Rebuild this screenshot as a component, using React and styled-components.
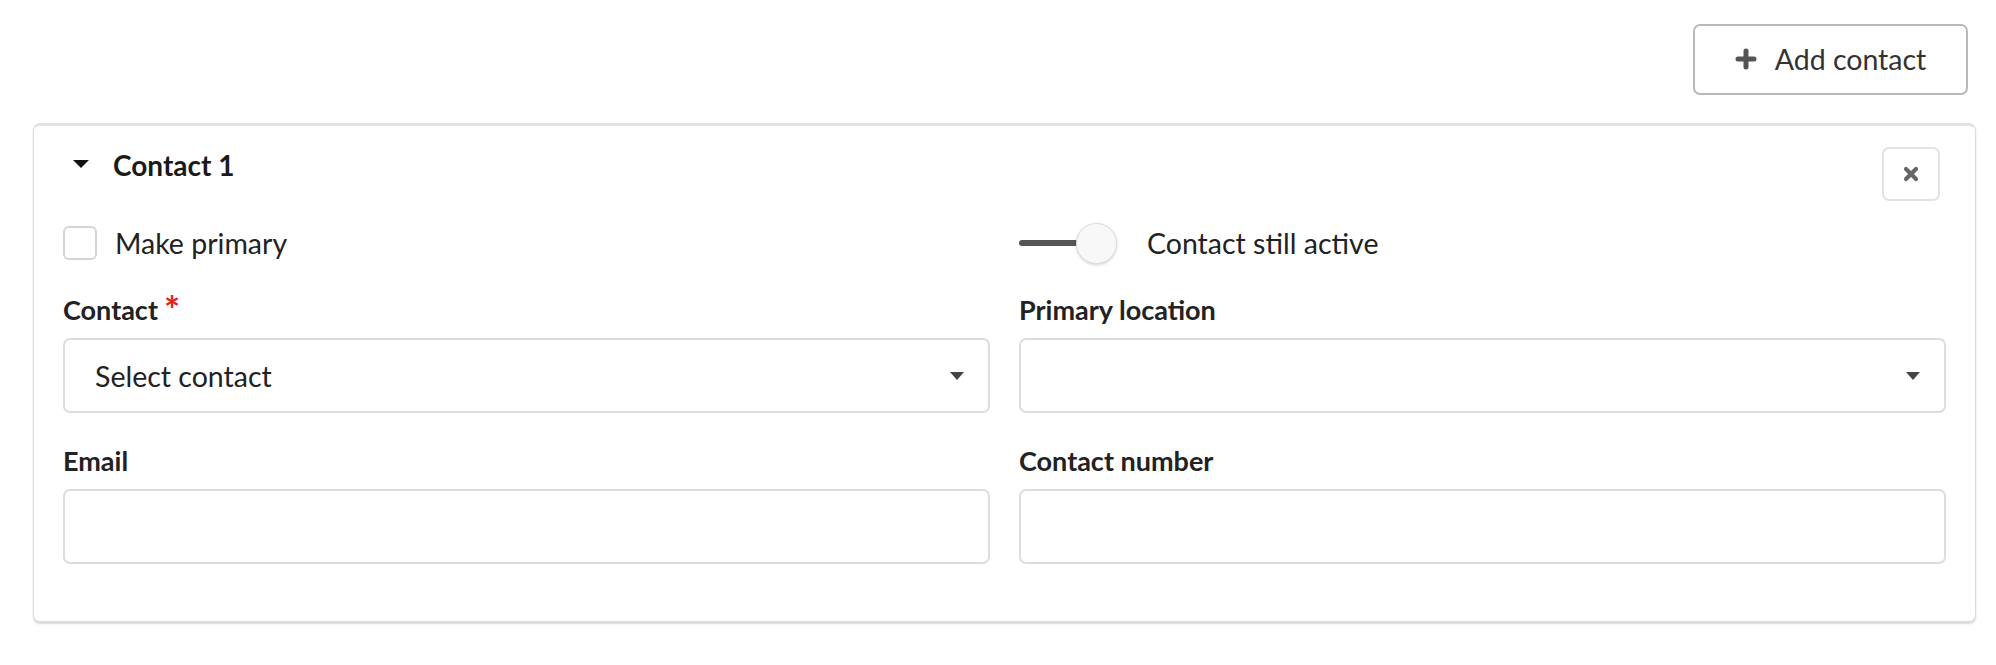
import React from "react";
import styled, { createGlobalStyle } from "styled-components";

const GlobalStyle = createGlobalStyle`
  * {
    box-sizing: border-box;
  }
  body {
    margin: 0;
    background: #ffffff;
    font-family: Lato, "Open Sans", sans-serif;
    color: #222222;
  }
`;

const Page = styled.div`
  padding: 24px 20px 40px 33px;
`;

const Toolbar = styled.div`
  display: flex;
  justify-content: flex-end;
  padding-right: 8px;
  margin-bottom: 28px;
`;

const AddButton = styled.button`
  display: flex;
  align-items: center;
  justify-content: center;
  gap: 18px;
  width: 275px;
  height: 71px;
  background: #ffffff;
  border: 2px solid #b9b9b9;
  border-radius: 7px;
  font-family: Lato, sans-serif;
  font-size: 28.5px;
  color: #333333;
  padding: 0 0 2px;
  cursor: pointer;
`;

const Card = styled.section`
  position: relative;
  border: 1px solid #dcdcdc;
  border-top: 3px solid #e2e2e2;
  border-radius: 7px;
  box-shadow: 0 2px 2px rgba(0, 0, 0, 0.16);
  padding: 21px 29px 57px 29px;
`;

const Header = styled.div`
  display: flex;
  align-items: center;
  gap: 24px;
  padding-left: 10px;
  height: 36px;
`;

const Caret = styled.span`
  width: 0;
  height: 0;
  margin-top: -3px;
  border-left: 8px solid transparent;
  border-right: 8px solid transparent;
  border-top: 8px solid #111111;
`;

const Title = styled.h2`
  margin: 0;
  font-size: 28px;
  line-height: 36px;
  font-weight: 700;
  color: #1a1a1a;
`;

const CloseButton = styled.button`
  position: absolute;
  top: 21px;
  right: 35px;
  width: 58px;
  height: 54px;
  display: flex;
  align-items: center;
  justify-content: center;
  background: #ffffff;
  border: 2px solid #e3e3e3;
  border-radius: 7px;
  padding: 0;
  cursor: pointer;
`;

const Grid = styled.div`
  display: grid;
  grid-template-columns: 1fr 1fr;
  column-gap: 29px;
  row-gap: ${(props) => props.rowGap || 0}px;
  margin-top: ${(props) => props.top}px;
`;

const OptionRow = styled.label`
  display: flex;
  align-items: center;
  gap: ${(props) => props.gap}px;
  height: 40px;
  font-size: 28.5px;
  color: #222222;
`;

const Checkbox = styled.span`
  width: 34px;
  height: 34px;
  border: 2px solid #d4d4d4;
  border-radius: 6px;
  background: #ffffff;
`;

const Toggle = styled.span`
  position: relative;
  width: 98px;
  height: 40px;
  flex-shrink: 0;
`;

const Track = styled.span`
  position: absolute;
  left: 0;
  top: 17px;
  width: 76px;
  height: 6px;
  border-radius: 3px;
  background: #555555;
`;

const Knob = styled.span`
  position: absolute;
  left: 57px;
  top: 0;
  width: 41px;
  height: 41px;
  border-radius: 50%;
  background: #f8f8f8;
  border: 1px solid #dddddd;
  box-shadow: 0 1px 3px rgba(0, 0, 0, 0.18);
`;

const Field = styled.div`
  display: flex;
  flex-direction: column;
`;

const Label = styled.div`
  font-size: 27px;
  line-height: 31px;
  font-weight: 700;
  color: #222222;
  margin-bottom: 13px;
`;

const Required = styled.span`
  color: #e02424;
  font-size: 38px;
  font-weight: 700;
  margin-left: 6px;
  vertical-align: top;
  line-height: 30px;
`;

const Box = styled.div`
  display: flex;
  align-items: center;
  justify-content: space-between;
  height: 75px;
  border: 2px solid #dddddd;
  border-radius: 7px;
  background: #ffffff;
  padding: 0 24px 0 30px;
  font-size: 28.5px;
  color: #222222;
`;

const Arrow = styled.span`
  width: 0;
  height: 0;
  border-left: 7px solid transparent;
  border-right: 7px solid transparent;
  border-top: 8px solid #444444;
  margin-left: auto;
`;

const PlusIcon = () => (
  <svg width="22" height="22" viewBox="0 0 22 22">
    <path
      d="M11 3v16M3 11h16"
      stroke="#555"
      strokeWidth="5"
      strokeLinecap="round"
      fill="none"
    />
  </svg>
);

const CloseIcon = () => (
  <svg width="18" height="18" viewBox="0 0 18 18">
    <path
      d="M4 4l10 10M14 4L4 14"
      stroke="#666"
      strokeWidth="4.2"
      strokeLinecap="round"
      fill="none"
    />
  </svg>
);

const fields = [
  { label: "Contact", required: true, select: true, value: "Select contact" },
  { label: "Primary location", select: true, value: "" },
  { label: "Email" },
  { label: "Contact number" },
];

const App = () => (
  <>
    <GlobalStyle />
    <Page>
      <Toolbar>
        <AddButton>
          <PlusIcon />
          Add contact
        </AddButton>
      </Toolbar>
      <Card>
        <Header>
          <Caret />
          <Title>Contact 1</Title>
        </Header>
        <CloseButton aria-label="Remove contact">
          <CloseIcon />
        </CloseButton>
        <Grid top={40}>
          <OptionRow gap={18}>
            <Checkbox />
            Make primary
          </OptionRow>
          <OptionRow gap={30}>
            <Toggle>
              <Track />
              <Knob />
            </Toggle>
            Contact still active
          </OptionRow>
        </Grid>
        <Grid top={31} rowGap={32}>
          {fields.map((field) => (
            <Field key={field.label}>
              <Label>
                {field.label}
                {field.required && <Required>*</Required>}
              </Label>
              <Box>
                {field.value}
                {field.select && <Arrow />}
              </Box>
            </Field>
          ))}
        </Grid>
      </Card>
    </Page>
  </>
);

export default App;
